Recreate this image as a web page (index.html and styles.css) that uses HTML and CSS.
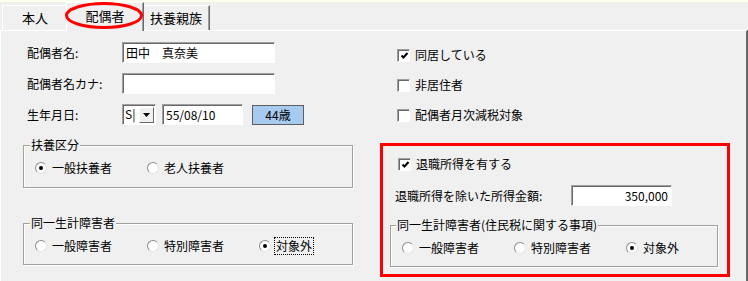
FILE: index.html
```html
<!DOCTYPE html>
<html lang="ja">
<head>
<meta charset="utf-8">
<link rel="stylesheet" href="styles.css">
</head>
<body>
<div class="window">
  <div class="topstrip"></div>
  <div class="tabbar">
    <div class="tab t1">本人</div>
    <div class="tab t2 active">配偶者</div>
    <div class="tab t3">扶養親族</div>
  </div>
  <svg class="ring" width="80" height="29" viewBox="0 0 80 29"><ellipse cx="40" cy="14.5" rx="37.5" ry="12" fill="none" stroke="#ff0000" stroke-width="3"/></svg>
  <div class="panel">
    <div class="col-left">
      <div class="row r1"><span class="label">配偶者名:</span><div class="field name">田中　真奈美</div></div>
      <div class="row r2"><span class="label">配偶者名カナ:</span><div class="field name"></div></div>
      <div class="row r3">
        <span class="label">生年月日:</span>
        <div class="field select"><span class="sel-text">S|</span><span class="dd"><svg width="7" height="4" viewBox="0 0 7 4"><polygon points="0,0 7,0 3.5,4" fill="#000"/></svg></span></div>
        <div class="field date">55/08/10</div>
        <div class="agebtn">44歳</div>
      </div>
      <div class="group g1">
        <div class="gtitle">扶養区分</div>
        <div class="radios">
          <div class="ritem"><span class="radio on"></span>一般扶養者</div>
          <div class="ritem"><span class="radio"></span>老人扶養者</div>
        </div>
      </div>
      <div class="group g2">
        <div class="gtitle">同一生計障害者</div>
        <div class="radios">
          <div class="ritem"><span class="radio"></span>一般障害者</div>
          <div class="ritem"><span class="radio"></span>特別障害者</div>
          <div class="ritem"><span class="radio on"></span><span class="focus">対象外</span></div>
        </div>
      </div>
    </div>
    <div class="col-right">
      <div class="cbrow c1"><span class="cb on"><svg width="9" height="9" viewBox="0 0 9 9"><polyline points="1.5,4.5 3.5,6.5 7.5,2" fill="none" stroke="#000" stroke-width="2"/></svg></span>同居している</div>
      <div class="cbrow c2"><span class="cb"></span>非居住者</div>
      <div class="cbrow c3"><span class="cb"></span>配偶者月次減税対象</div>
      <div class="redbox">
        <div class="cbrow c4"><span class="cb on"><svg width="9" height="9" viewBox="0 0 9 9"><polyline points="1.5,4.5 3.5,6.5 7.5,2" fill="none" stroke="#000" stroke-width="2"/></svg></span>退職所得を有する</div>
        <div class="row r4"><span class="label wide">退職所得を除いた所得金額:</span><div class="field amount">350,000</div></div>
        <div class="group g3">
          <div class="gtitle">同一生計障害者(住民税に関する事項)</div>
          <div class="radios">
            <div class="ritem"><span class="radio"></span>一般障害者</div>
            <div class="ritem"><span class="radio"></span>特別障害者</div>
            <div class="ritem"><span class="radio on"></span>対象外</div>
          </div>
        </div>
      </div>
    </div>
  </div>
</div>
</body>
</html>
```

FILE: styles.css
```css
* { box-sizing: border-box; }
html, body { margin: 0; padding: 0; }
body {
  font-family: "Noto Sans CJK JP", "Noto Sans", sans-serif;
  font-size: 12px;
  line-height: 14px;
  color: #000;
  background: #f0f0f0;
}
.window {
  position: relative;
  width: 748px;
  height: 281px;
  overflow: hidden;
  background: #f0f0f0;
}
.topstrip { height: 2px; background: #fffff0; }
.tabbar {
  height: 28px;
  display: flex;
  align-items: flex-end;
  padding-left: 2px;
}
.tab {
  position: relative;
  height: 25px;
  padding-top: 5px;
  text-align: center;
  font-size: 13px;
  background: #f0f0f0;
  border-top: 1px solid #fff;
  border-left: 1px solid #fff;
  border-right: 1px solid #696969;
  box-shadow: inset -1px 0 0 #a0a0a0;
}
.t1 { width: 66px; }
.t2 { width: 74px; }
.t3 { width: 68px; }
.tab.active {
  width: 78px;
  height: 29px;
  margin: 0 -2px -1px;
  padding-top: 6px;
  z-index: 1;
}
.ring { position: absolute; left: 64px; top: 1px; z-index: 2; }
.panel {
  height: 251px;
  display: flex;
  border-top: 1px solid #fff;
  border-left: 1px solid #fff;
  border-right: 2px solid #696969;
}
.col-left { width: 379px; padding-left: 22px; }
.col-right { flex: 1; }

.row { display: flex; align-items: center; height: 21px; }
.r1 { margin-top: 11px; padding-left: 4px; }
.r2 { margin-top: 10px; padding-left: 4px; }
.r3 { margin-top: 10px; padding-left: 4px; }
.label { width: 95px; flex: none; }
.label.wide { width: 176px; }

.field {
  height: 21px;
  background: #fff;
  border-top: 1px solid #a0a0a0;
  border-left: 1px solid #a0a0a0;
  border-right: 1px solid #fff;
  border-bottom: 1px solid #fff;
  box-shadow: inset 1px 1px 0 #696969;
  padding: 3px 3px 0 3px;
  white-space: nowrap;
}
.name { width: 153px; }
.select { width: 34px; display: flex; padding: 2px 1px 1px 2px; }
.sel-text { width: 15px; }
.dd {
  width: 15px;
  height: 16px;
  display: flex;
  align-items: center;
  justify-content: center;
  background: #f0f0f0;
  border-top: 1px solid #fff;
  border-left: 1px solid #fff;
  border-right: 1px solid #696969;
  border-bottom: 1px solid #696969;
}
.date { width: 81px; margin-left: 6px; }
.agebtn {
  width: 52px;
  height: 20px;
  margin-left: 9px;
  margin-top: 1px;
  background: #a6caf0;
  border: 1px solid #5f5f5f;
  text-align: center;
  padding-top: 2px;
}
.amount { width: 101px; text-align: right; padding-right: 3px; }

.group {
  border: 1px solid #a0a0a0;
  box-shadow: 1px 1px 0 #fff, inset 1px 1px 0 #fff;
}
.gtitle {
  width: fit-content;
  margin: -8px 0 0 6px;
  padding: 0 1px;
  background: #f0f0f0;
  white-space: nowrap;
}
.g1 { width: 330px; height: 43px; margin-top: 20px; }
.g2 { width: 330px; height: 42px; margin-top: 35px; }
.radios { display: flex; margin-top: 9px; padding-left: 11px; }
.ritem { width: 112px; flex: none; display: flex; align-items: center; height: 14px; }
.radio {
  width: 12px;
  height: 12px;
  flex: none;
  margin-right: 5px;
  border-radius: 50%;
  background: #fff;
  border: 1px solid;
  border-color: #8c8c8c #e3e3e3 #e3e3e3 #8c8c8c;
  display: flex;
  align-items: center;
  justify-content: center;
}
.radio.on::after {
  content: "";
  width: 4px;
  height: 4px;
  border-radius: 50%;
  background: #000;
}
.focus { outline: 1px dotted #000; outline-offset: 1px; }

.cbrow { display: flex; align-items: center; height: 14px; }
.c1 { margin-top: 17px; padding-left: 17px; }
.c2 { margin-top: 16px; padding-left: 17px; }
.c3 { margin-top: 16px; padding-left: 17px; }
.cb {
  width: 13px;
  height: 13px;
  flex: none;
  margin-right: 5px;
  background: #fff;
  border-top: 1px solid #a0a0a0;
  border-left: 1px solid #a0a0a0;
  border-right: 1px solid #fff;
  border-bottom: 1px solid #fff;
  box-shadow: inset 1px 1px 0 #696969;
  display: flex;
  align-items: center;
  justify-content: center;
  padding: 1px 0 0 1px;
}
.redbox {
  width: 350px;
  height: 134px;
  margin-top: 21px;
  border: 3px solid #ff0000;
}
.c4 { margin-top: 11px; padding-left: 15px; }
.r4 { margin-top: 14px; padding-left: 12px; }
.g3 { width: 328px; height: 42px; margin-top: 19px; margin-left: 7px; }
.g3 .gtitle { margin-left: 5px; }
```
